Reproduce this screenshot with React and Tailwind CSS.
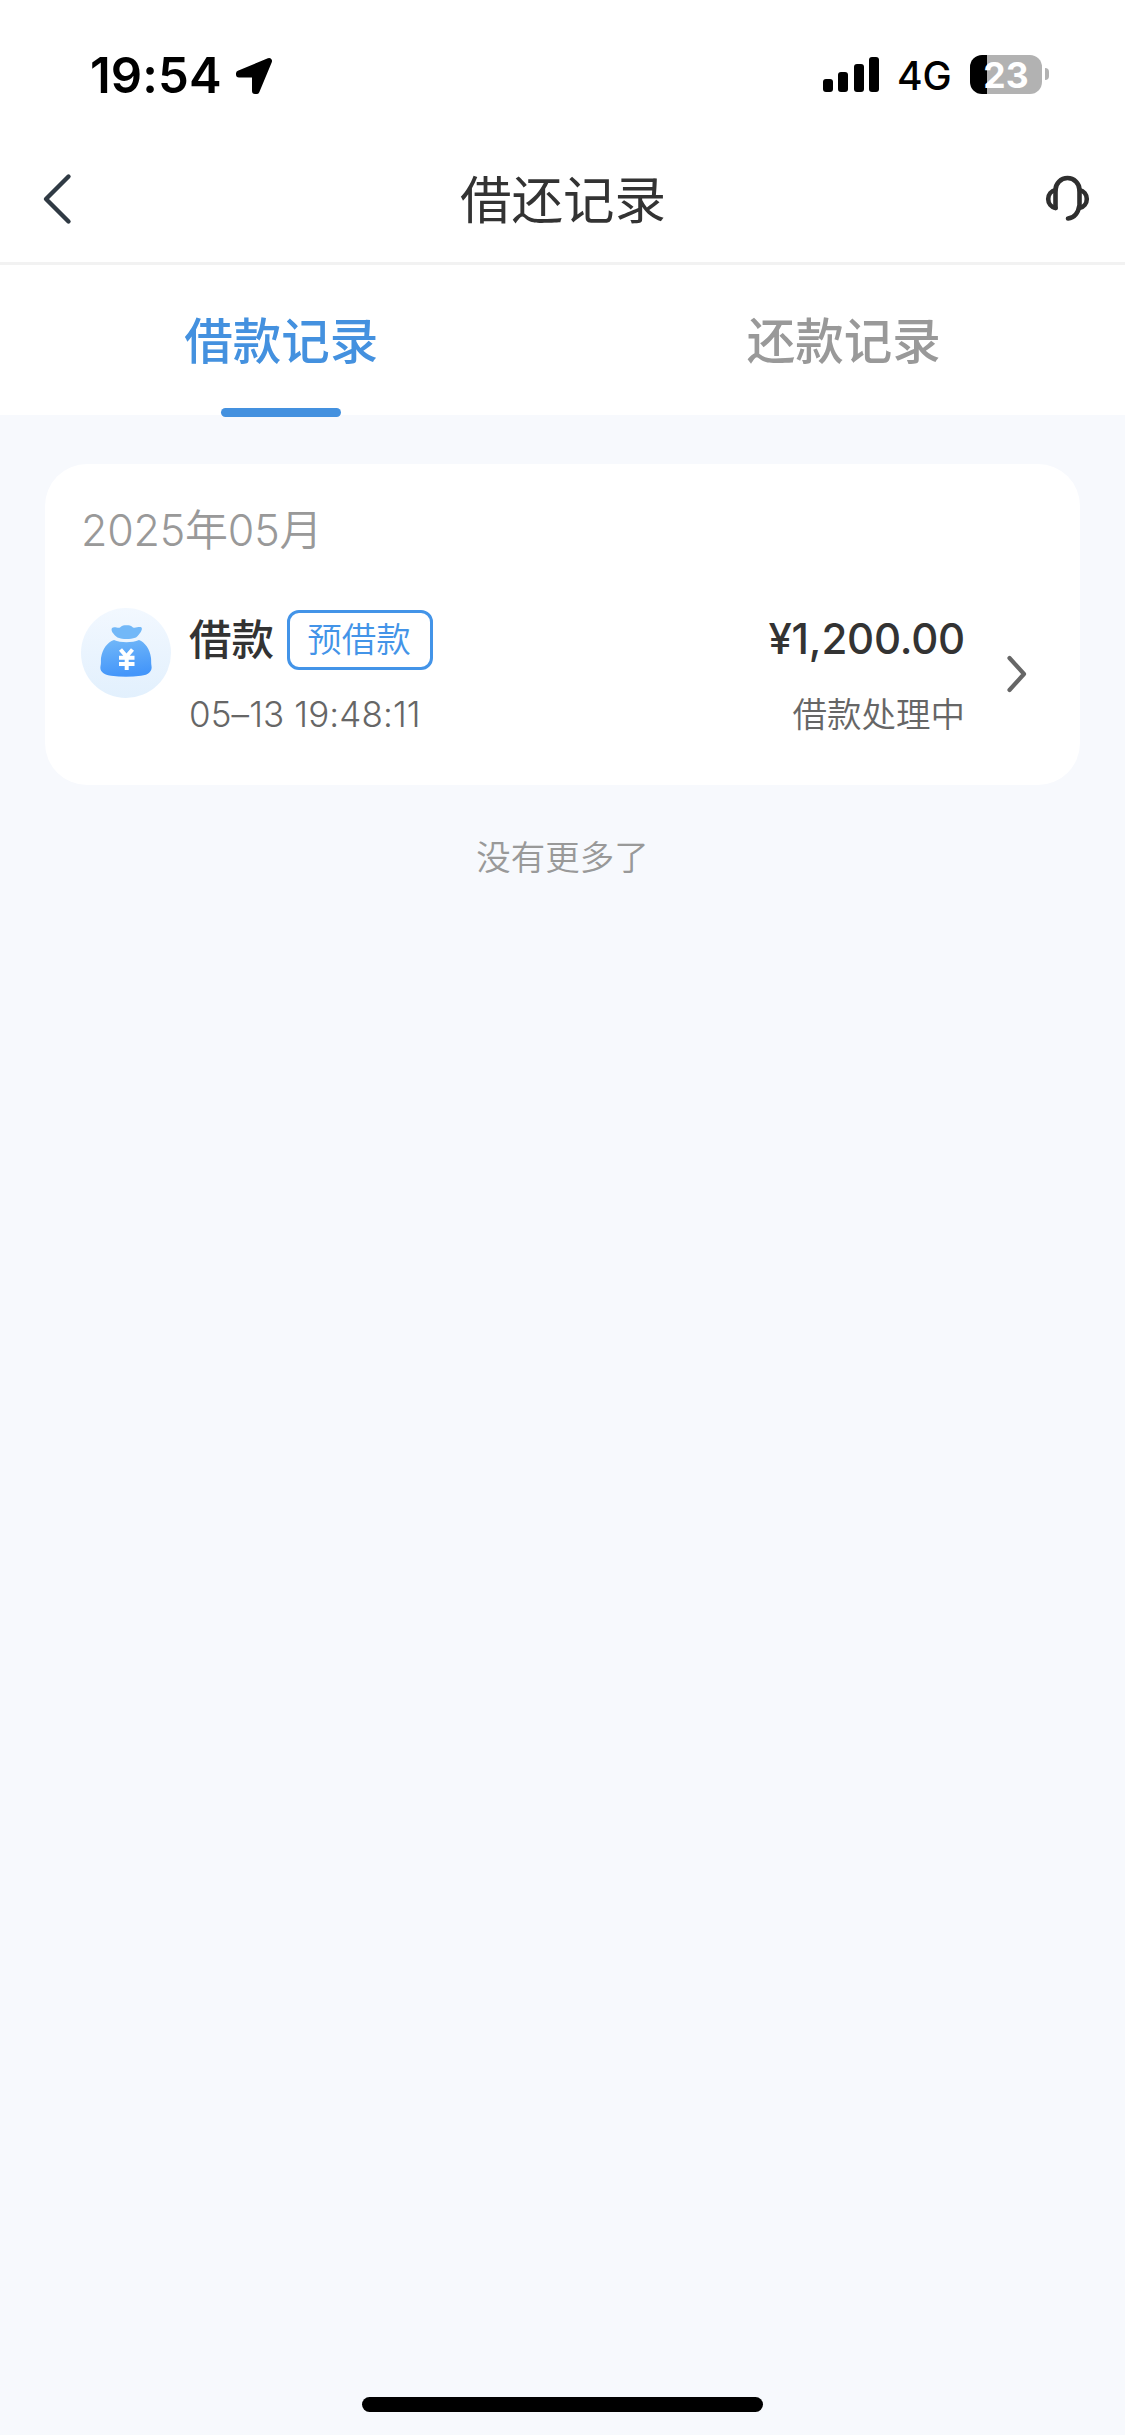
import React from 'react';

const records = [
  {
    title: '借款',
    tag: '预借款',
    time: '05–13 19:48:11',
    amount: '¥1,200.00',
    status: '借款处理中',
  },
];

const StatusBar = () => (
  <div className="flex h-[134px] items-start justify-between pl-[90px] pr-[76px] pt-[54px] text-black">
    <div className="flex h-10 items-center">
      <span className="w-[145px] whitespace-nowrap pt-[4px] text-[49px] font-semibold leading-10 tracking-[0.1px]">19:54</span>
      <svg className="mt-[3px] h-[38px] w-[38px]" viewBox="0 0 38 38">
        <path
          d="M34 4 L21.5 34 L20 34 L20 18.5 Q20 17.5 19 17.5 L4 17.5 L4 16.5 Z"
          fill="black"
          stroke="black"
          strokeWidth="6"
          strokeLinejoin="round"
        />
      </svg>
    </div>
    <div className="flex h-10 items-center">
      <div className="flex h-[35px] items-end gap-[5.5px]">
        <span className="h-[13px] w-[10px] rounded-[3px] bg-black" />
        <span className="h-[20px] w-[10px] rounded-[3px] bg-black" />
        <span className="h-[28px] w-[10px] rounded-[3px] bg-black" />
        <span className="h-[35px] w-[10px] rounded-[3px] bg-black" />
      </div>
      <span className="ml-[18px] w-[73px] whitespace-nowrap pt-[3px] text-[39px] font-medium leading-9 tracking-[-0.1px]">4G</span>
      <div className="flex h-[39px] w-[72px] items-center justify-center rounded-[12px] bg-[linear-gradient(to_right,#000_17px,#b2b2b2_17px)] pt-[2px] text-[35.5px] font-bold leading-[37px] text-white">
        23
      </div>
      <span className="ml-[3px] h-[12px] w-1 rounded-r-full bg-[#b2b2b2]" />
    </div>
  </div>
);

const Header = () => (
  <div className="flex h-[131px] items-center justify-between border-b-[3px] border-[#f2f2f2] pl-[40px] pr-[35px]">
    <svg className="h-[54px] w-[48px]" viewBox="0 0 48 54" fill="none">
      <path d="M28.5 5.5 L6 28 L28.5 50.5" stroke="#303a44" strokeWidth="4.4" strokeLinecap="round" strokeLinejoin="round" />
    </svg>
    <h1 className="pr-[4px] pt-[5px] text-[51.5px] leading-none text-[#333]">借还记录</h1>
    <svg className="h-[50px] w-[48px]" viewBox="0 0 48 50" fill="none" stroke="#2f2f2f" strokeWidth="4.6" strokeLinecap="round">
      <path d="M13.5 35 V17 A12 12 0 0 1 37.5 17 V32 Q35.5 44.5 26 45.5" />
      <path d="M13.5 17 A9.2 9.2 0 0 0 13.5 35" />
      <path d="M37.5 17 A9.2 9.2 0 0 1 37.5 35" />
    </svg>
  </div>
);

const Tab = ({ label, active }) => (
  <div className={active ? 'flex flex-1 flex-col items-center text-[#4491df]' : 'flex flex-1 flex-col items-center text-[#999]'}>
    <span className="mt-[47px] text-[48.5px] font-medium leading-[60px]">{label}</span>
    {active && <span className="mt-[36px] h-[9px] w-[120px] shrink-0 rounded-full bg-[#4491df]" />}
  </div>
);

const MoneyBag = () => (
  <svg className="h-[90px] w-[90px] shrink-0" viewBox="0 0 90 90">
    <defs>
      <linearGradient id="disc" x1="0" y1="0" x2="0" y2="1">
        <stop offset="0" stopColor="#f2f8ff" />
        <stop offset="1" stopColor="#e2f0fd" />
      </linearGradient>
      <linearGradient id="bag" x1="0" y1="0" x2="0.2" y2="1">
        <stop offset="0" stopColor="#72b8f8" />
        <stop offset="1" stopColor="#4496fa" />
      </linearGradient>
    </defs>
    <circle cx="45" cy="45" r="45" fill="url(#disc)" />
    <path
      d="M31 20 C33 18 37 20.5 39 19.5 C41 17.5 43 17.3 45.5 17.3 C48 17.3 50 17.5 52 19.5 C55 20.5 58 18 60.5 19.5 C62 21.5 59 26 55 29.5 C51 30.5 49 31 45.5 31 C42 31 40 30.5 36.5 29.5 C32 26 29.5 22.5 31 20 Z"
      fill="#72b8f8"
    />
    <path
      d="M33 32 C40 35 51 35 58 32 C64 34.5 69 41 70 50 C70.3 53 70 55 70.5 58 C71.5 63 67.5 67 60 67.8 C50 69 40 69 30 67.8 C22 66.5 18.5 63 19.5 58 C20.3 55 19.7 53 20 50 C21.5 41 26 34.5 33 32 Z"
      fill="url(#bag)"
    />
    <path d="M39.5 41.5 L45.5 48.5 L51.5 41.5 M38 49.8 H53.5 M38 56 H53.5 M45.7 48 V62" fill="none" stroke="white" strokeWidth="4" />
  </svg>
);

const RecordRow = ({ title, tag, time, amount, status }) => (
  <div className="mt-[48px] flex">
    <MoneyBag />
    <div className="ml-[18px] flex-1">
      <div className="mt-[2px] flex h-[60px] items-center">
        <span className="text-[42.5px] font-medium leading-none text-[#333]">{title}</span>
        <span className="ml-[13px] flex h-[60px] w-[146px] items-center justify-center rounded-[12px] border-[3px] border-[#4394e8] pr-[2px] text-[34.5px] font-[350] leading-none text-[#4394e8]">
          {tag}
        </span>
      </div>
      <div className="mt-[24px] whitespace-nowrap text-[35px] font-[350] leading-[40px] tracking-[0.1px] text-[#666]">{time}</div>
    </div>
    <div className="flex flex-col items-end">
      <span className="mt-px text-[42px] font-medium leading-[60px] tracking-[-0.2px] text-[#333]">{amount}</span>
      <span className="mt-[26px] text-[34.5px] font-[350] leading-[40px] text-[#666]">{status}</span>
    </div>
    <svg className="ml-[38px] mr-[2px] mt-[45px] h-[42px] w-[28px]" viewBox="0 0 28 42" fill="none">
      <path d="M6.5 5 L21 21 L6.5 37" stroke="#666" strokeWidth="4.2" strokeLinecap="round" strokeLinejoin="round" />
    </svg>
  </div>
);

export default function App() {
  return (
    <div className="flex h-[2435px] w-[1125px] flex-col bg-[#f7f9fd] font-['Inter','Noto_Sans_CJK_SC',sans-serif]">
      <div className="bg-white">
        <StatusBar />
        <Header />
        <div className="flex h-[150px]">
          <Tab label="借款记录" active />
          <Tab label="还款记录" />
        </div>
      </div>

      <div className="mx-[45px] mt-[49px] h-[321px] rounded-[42px] bg-white pl-[36px] pr-[47px] pt-[36px]">
        <div className="text-[43px] font-[350] leading-[60px] tracking-[-0.2px] text-[#999]">2025年05月</div>
        {records.map((record) => (
          <RecordRow key={record.time} {...record} />
        ))}
      </div>

      <div className="mt-[48px] text-center text-[34.5px] font-[350] leading-[50px] text-[#999]">没有更多了</div>

      <div className="mx-auto mb-[23px] mt-auto h-[15px] w-[401px] rounded-full bg-black" />
    </div>
  );
}
